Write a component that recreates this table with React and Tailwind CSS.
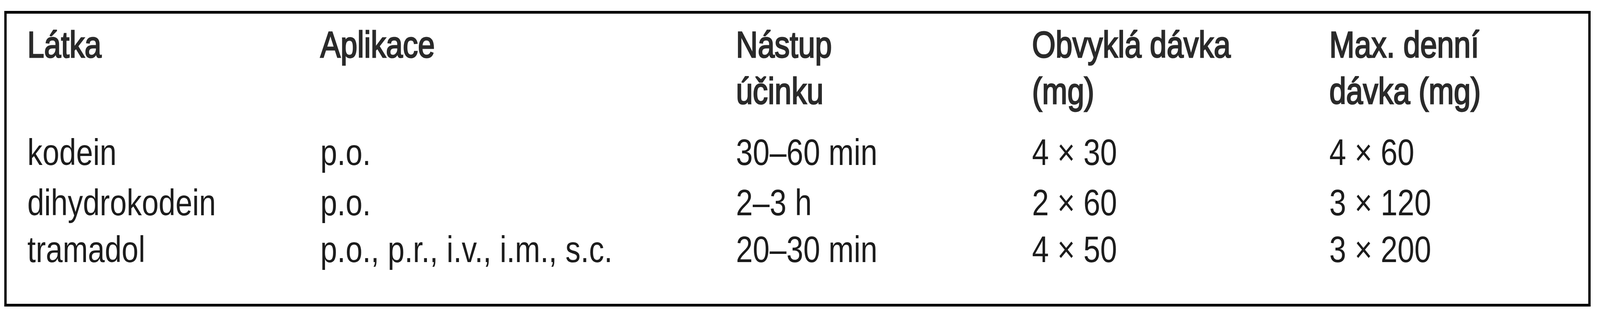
const headers = [
  ["Látka"],
  ["Aplikace"],
  ["Nástup", "účinku"],
  ["Obvyklá dávka", "(mg)"],
  ["Max. denní", "dávka (mg)"],
];

const rows = [
  ["kodein", "p.o.", "30–60 min", "4 × 30", "4 × 60"],
  ["dihydrokodein", "p.o.", "2–3 h", "2 × 60", "3 × 120"],
  ["tramadol", "p.o., p.r., i.v., i.m., s.c.", "20–30 min", "4 × 50", "3 × 200"],
];

const cols = "grid grid-cols-[920fr_1303fr_929fr_933fr_813fr]";
// glyphs are a touch condensed in the source table
const cell = "whitespace-nowrap origin-left scale-x-[0.816]";

export default function App() {
  return (
    <div className="w-full h-[800px] bg-white pt-[28px] pl-[0.279vw] font-['Liberation_Sans',Arial,sans-serif] text-[95px] text-[#1c1c1c]">
      <div className="w-[99.143vw] h-[758px] border-y-[7px] border-x-[6px] border-black pl-[1.275vw] pt-[20px]">
        <div className={`${cols} leading-[119px] text-[#2a2a2a] [-webkit-text-stroke:3px_#2a2a2a]`}>
          {headers.map((h, i) => (
            <div key={i} className={cell}>
              {h.map((line, j) => (
                <div key={j}>{line}</div>
              ))}
            </div>
          ))}
        </div>
        <div className="mt-[37px] leading-[120px]">
          {rows.map((r, i) => (
            <div key={i} className={`${cols} ${i === 0 ? "pb-[9px]" : ""}`}>
              {r.map((c, j) => (
                <div key={j} className={cell}>
                  {c}
                </div>
              ))}
            </div>
          ))}
        </div>
      </div>
    </div>
  );
}
